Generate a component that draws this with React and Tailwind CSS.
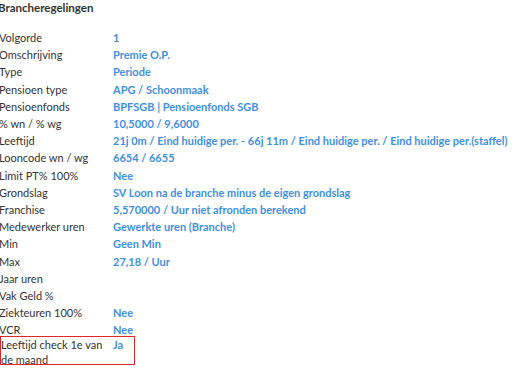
import React from "react";

const rows = [
  ["Volgorde", "1"],
  ["Omschrijving", "Premie O.P."],
  ["Type", "Periode"],
  ["Pensioen type", "APG / Schoonmaak"],
  ["Pensioenfonds", "BPFSGB | Pensioenfonds SGB"],
  ["% wn / % wg", "10,5000 / 9,6000"],
  ["Leeftijd", "21j 0m / Eind huidige per. - 66j 11m / Eind huidige per. / Eind huidige per.(staffel)"],
  ["Looncode wn / wg", "6654 / 6655"],
  ["Limit PT% 100%", "Nee"],
  ["Grondslag", "SV Loon na de branche minus de eigen grondslag"],
  ["Franchise", "5,570000 / Uur niet afronden berekend"],
  ["Medewerker uren", "Gewerkte uren (Branche)"],
  ["Min", "Geen Min"],
  ["Max", "27,18 / Uur"],
  ["Jaar uren", ""],
  ["Vak Geld %", ""],
  ["Ziekteuren 100%", "Nee"],
  ["VCR", "Nee"],
];

function Row({ label, value }) {
  return (
    <div className="flex py-[1.1px]">
      <div className="w-[114px] shrink-0 text-[#333]">{label}</div>
      <div className="font-bold text-[#4290dd] whitespace-nowrap">{value}</div>
    </div>
  );
}

export default function App() {
  return (
    <div className="w-[517px] h-[369px] overflow-hidden bg-white">
      <div
        className="-ml-[1px] text-[11px] leading-[15px]"
        style={{ fontFamily: "Lato, 'Open Sans', sans-serif" }}
      >
        <h2 className="-ml-[1px] font-bold text-[11.5px] text-[#333] mb-[14px]">Brancheregelingen</h2>

        {rows.map(([label, value]) => (
          <Row key={label} label={label} value={value} />
        ))}

        {/* highlighted row */}
        <div className="ml-[1px] flex w-[135px] h-[29px] border border-[#e0262b] -mt-[2px] pt-[1px]">
          <div className="w-[112px] shrink-0 pr-1 leading-[14.5px] text-[#333]">Leeftijd check 1e van de maand</div>
          <div className="font-bold text-[#4290dd] leading-[14.5px]">Ja</div>
        </div>
      </div>
    </div>
  );
}
